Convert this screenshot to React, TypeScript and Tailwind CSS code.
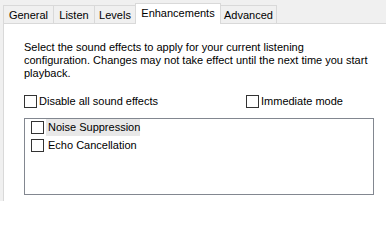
import React from "react";

function Box() {
  return <span className="inline-block h-[13px] w-[13px] shrink-0 border border-[#333333] bg-white" />;
}

const tabs = [
  { name: "General", w: "w-[51px]" },
  { name: "Listen", w: "w-[42px]" },
  { name: "Levels", w: "w-[42px]" },
  { name: "Enhancements", w: "w-[86px]", active: true },
  { name: "Advanced", w: "w-[57px]" },
];

export default function App() {
  return (
    <div
      className="relative h-[201px] w-[386px] overflow-hidden bg-[#f0f0f0] text-[11px] text-black"
      style={{ fontFamily: '"Liberation Sans", "Segoe UI", sans-serif' }}
    >
      {/* tab strip */}
      <div className="flex h-[23px] items-start pl-[3px] pt-[3px]">
        {tabs.map((t, i) =>
          t.active ? (
            <div
              key={t.name}
              className={`relative z-10 -ml-px flex h-[21px] items-center justify-center border border-b-0 border-[#d9d9d9] bg-white pb-[2px] ${t.w}`}
            >
              {t.name}
            </div>
          ) : (
            <div
              key={t.name}
              className={`mt-[2px] flex h-[18px] items-center justify-center border border-b-0 border-[#d9d9d9] bg-[#f0f0f0] pt-[1px] ${i > 0 ? "-ml-px" : ""} ${t.w}`}
            >
              {t.name}
            </div>
          )
        )}
      </div>

      {/* page */}
      <div className="ml-[3px] h-[200px] border-l border-t border-[#d9d9d9] bg-white pl-[20px] pt-[17px]">
        <div className="leading-[13px]">
          <div className="whitespace-nowrap">Select the sound effects to apply for your current listening</div>
          <div className="whitespace-nowrap">configuration. Changes may not take effect until the next time you start</div>
          <div className="whitespace-nowrap">playback.</div>
        </div>

        <div className="mt-[15px] flex h-[13px] items-center">
          <label className="flex w-[222px] items-center gap-[2px]">
            <Box />
            <span>Disable all sound effects</span>
          </label>
          <label className="flex items-center gap-[2px]">
            <Box />
            <span>Immediate mode</span>
          </label>
        </div>

        <div className="mt-[10px] h-[77px] w-[350px] border border-[#828790] bg-white pl-[6px]">
          <div className="flex h-[17px] items-center">
            <Box />
            <span className="ml-[2px] flex h-[17px] w-[94px] items-center whitespace-nowrap bg-[#e8e8e8] px-[2px]">
              Noise Suppression
            </span>
          </div>
          <div className="mt-[1px] flex h-[17px] items-center">
            <Box />
            <span className="ml-[4px] whitespace-nowrap">Echo Cancellation</span>
          </div>
        </div>
      </div>
    </div>
  );
}
